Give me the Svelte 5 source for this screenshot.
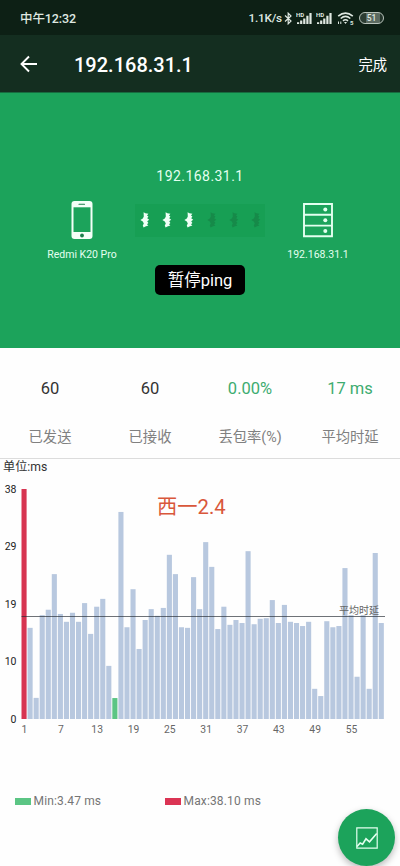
<script>
  const host = '192.168.31.1';
  const dots = [true, true, true, false, false, false];

  const stats = [
    { value: '60', label: '已发送' },
    { value: '60', label: '已接收' },
    { value: '0.00%', label: '丢包率(%)', green: true },
    { value: '17 ms', label: '平均时延', green: true }
  ];

  const samples = [
    38.1, 15.1, 3.5, 17.2, 18.1, 24.0, 17.4, 16.1, 17.6, 16.1, 19.2, 14.1, 18.6, 19.9, 8.8,
    3.47, 34.3, 15.2, 21.5, 11.6, 16.4, 18.2, 17.1, 18.4, 27.2, 24.0, 15.2, 15.1, 23.5, 18.2,
    29.3, 25.2, 14.9, 18.6, 15.6, 16.4, 15.9, 27.8, 15.7, 16.6, 16.7, 19.7, 15.9, 18.9, 16.1,
    15.9, 15.4, 16.1, 5.0, 3.8, 16.2, 15.2, 15.4, 25.0, 17.2, 7.0, 17.2, 5.0, 27.5, 15.9
  ];

  const max = Math.max(...samples);
  const min = Math.min(...samples);

  // chart geometry
  const left = 21.5;
  const base = 244;
  const plotHeight = 230;
  const step = 6.055;
  const barWidth = 5.1;

  const yTicks = [38, 29, 19, 10, 0];
  const xTicks = [1, 7, 13, 19, 25, 31, 37, 43, 49, 55];

  function barHeight(ms) {
    return (ms / max) * plotHeight;
  }

  function barColor(ms) {
    if (ms === max) return '#d73451';
    if (ms === min) return '#5bc584';
    return '#b8c8df';
  }
</script>

<div class="screen">
  <header>
    <div class="status">
      <span class="time">中午12:32</span>
      <div class="indicators">
        <span class="speed">1.1K/s</span>
        <svg width="9" height="13" viewBox="0 0 9 13" fill="none" stroke="#dfe8e1" stroke-width="1.2">
          <path d="M1 3.5 7 9 4.2 11.8V1.2L7 4 1 9.5" />
        </svg>
        {#each [0, 1] as sim (sim)}
          <svg class="signal" width="17" height="13" viewBox="0 0 17 13" fill="#dfe8e1">
            <text x="0" y="4.9">HD</text>
            <path d="M1 10.3h2.2V12H1zM4.1 8.6h2.2V12H4.1zM7.2 6.6h2.2V12H7.2zM10.3 3.8h2.2V12h-2.2zM13.4 1h2.2v11h-2.2z" />
          </svg>
        {/each}
        <svg class="wifi" width="18" height="13" viewBox="0 0 18 13" fill="none" stroke="#dfe8e1" stroke-width="1.6">
          <path d="M1.2 4.2Q8.5-2 15.8 4.2M3.7 6.5Q8.5 2.3 13.3 6.5M6 8.8Q8.5 6.7 11 8.8" />
          <path d="M7 10h3L8.5 12z" fill="#dfe8e1" stroke="none" />
          <path d="M1.5 9.5V12M3.8 9.5V12" stroke-width="1" />
          <text x="13" y="12.6" fill="#dfe8e1" stroke="none">5</text>
        </svg>
        <span class="battery">51</span>
      </div>
    </div>
    <div class="appbar">
      <svg width="18" height="18" viewBox="0 0 18 18" fill="none" stroke="#fff" stroke-width="1.9">
        <path d="M17 9H2M9 1.5 1.5 9 9 16.5" />
      </svg>
      <h1>{host}</h1>
      <span class="done">完成</span>
    </div>
  </header>

  <section class="hero">
    <p class="target">{host}</p>
    <div class="link">
      <div class="device">
        <svg width="22" height="38" viewBox="0 0 22 38">
          <rect x=".5" width="21" height="38" rx="3" fill="#f4fff8" />
          <rect x="2.5" y="6.3" width="17" height="24.7" fill="#1ca35b" />
          <path d="M8 3.2h5.5" stroke="#1b7f4b" stroke-width="1.1" stroke-linecap="round" />
          <circle cx="11" cy="34.5" r="1.9" fill="#1b7f4b" />
        </svg>
        <span>Redmi K20 Pro</span>
      </div>
      <div class="packets">
        {#each dots as on, i (i)}
          <svg class:on width="10" height="16" viewBox="0 0 10 16">
            <path d="M3.6.3 5.4 1.2 8.4 1.8 7 3.6 8.4 4.6 7.2 6.2 9.2 7.8 7.2 9.2 8.4 11 7 12.2 8.4 13.6 5.4 14.4 3.6 15.6 2.8 13.4 3.8 11.4 2.8 9.4.4 7.9l2.4-1.5 1-2z" />
          </svg>
        {/each}
      </div>
      <div class="device">
        <svg width="30" height="38" viewBox="0 0 30 38" fill="none" stroke="#e4fff0" stroke-width="1.9">
          <path d="M1 3h28v32.3H1zM1 13.8h28M1 24.6h28" />
          <g fill="#e4fff0" stroke="none">
            <circle cx="22.3" cy="8.6" r="2" />
            <circle cx="22.3" cy="19.3" r="2" />
            <circle cx="22.3" cy="30.1" r="2" />
          </g>
        </svg>
        <span>{host}</span>
      </div>
    </div>
    <button class="pause">暂停ping</button>
  </section>

  <section class="stats">
    {#each stats as stat}
      <div class="stat" class:green={stat.green}>
        <strong>{stat.value}</strong>
        <span>{stat.label}</span>
      </div>
    {/each}
  </section>

  <section class="chart">
    <div class="unit">单位:ms</div>
    <svg width="400" height="270" viewBox="0 0 400 270">
      {#each samples as ms, i}
        <rect
          x={left + i * step}
          y={base - barHeight(ms)}
          width={barWidth}
          height={barHeight(ms)}
          fill={barColor(ms)}
        />
      {/each}
      {#each yTicks as tick, i}
        <text class="y-tick" x="16.5" y={17.7 + i * 57.5}>{tick}</text>
      {/each}
      {#each xTicks as tick}
        <text class="x-tick" x={left + (tick - 1) * step + 3} y="258">{tick}</text>
      {/each}
      <path d="M21.5 141.5H385" stroke="#20262e" stroke-opacity=".65" />
      <text class="average" x="379" y="139">平均时延</text>
      <text class="note" x="157" y="39">西一2.4</text>
    </svg>
  </section>

  <footer>
    <div class="legend"><i class="min"></i>Min:{min.toFixed(2)} ms</div>
    <div class="legend"><i class="max"></i>Max:{max.toFixed(2)} ms</div>
  </footer>

  <button class="fab" aria-label="chart">
    <svg width="22" height="22" viewBox="0 0 22 22" fill="none" stroke="#e4fff0" stroke-width="1.2">
      <path d="M.8.8h20.4v20.4H.8z" />
      <path d="M1 19.5 4.2 16l2.4 1.2 3.4-5.4 3.5 3 7.2-8.3" stroke-width="1.6" />
    </svg>
  </button>
</div>

<style>
  :global(body) {
    margin: 0;
    background: #fff;
  }

  .screen {
    position: relative;
    width: 400px;
    height: 866px;
    overflow: hidden;
    background: #fefefe;
    font-family: Roboto, 'Noto Sans CJK SC', sans-serif;
    color: #333;
  }

  .status {
    display: flex;
    align-items: center;
    justify-content: space-between;
    box-sizing: border-box;
    height: 35px;
    padding: 1px 16px 0 20px;
    background: #0d2015;
    color: #dfe8e1;
    font-weight: 500;
  }

  .time {
    margin-top: -2px;
    font-size: 12.5px;
    letter-spacing: -0.1px;
  }

  .indicators {
    display: flex;
    align-items: center;
  }

  .speed {
    margin-right: 2px;
    font-size: 11.8px;
    letter-spacing: -0.2px;
  }

  .signal {
    margin-left: 3px;
  }

  .signal text {
    font-size: 6px;
    font-weight: 700;
  }

  .wifi {
    margin-left: 4px;
  }

  .wifi text {
    font-size: 6px;
    font-weight: 700;
  }

  .battery {
    box-sizing: border-box;
    width: 25px;
    height: 12px;
    margin-left: 4px;
    border: 1.5px solid #b9c4bc;
    border-radius: 6px;
    background: linear-gradient(90deg, #2b3c32 25%, #5b6a60 25%, #5b6a60 85%, #24352b 85%);
    font-size: 8.5px;
    font-weight: 500;
    line-height: 10px;
    text-align: center;
  }

  .appbar {
    display: flex;
    align-items: center;
    box-sizing: border-box;
    height: 58px;
    padding: 0 13px 0 20px;
    border-bottom: 1px solid #176b3f;
    background: #142e20;
    color: #fff;
  }

  h1 {
    flex: 1;
    margin: 2px 0 0 36px;
    font-size: 20px;
    font-weight: 500;
  }

  .done {
    font-size: 14.3px;
  }

  .hero {
    display: flex;
    flex-direction: column;
    align-items: center;
    box-sizing: border-box;
    height: 255px;
    padding-top: 73px;
    background: #1ca35b;
    color: #e4fff0;
  }

  .target {
    margin: 0;
    font-size: 14px;
    line-height: 20px;
    letter-spacing: 0.45px;
  }

  .link {
    display: grid;
    grid-template-columns: 106px 130px 106px;
    align-items: start;
    margin-top: 15px;
  }

  .device {
    display: flex;
    flex-direction: column;
    align-items: center;
    font-size: 10.5px;
    line-height: 14px;
    white-space: nowrap;
  }

  .device span {
    margin-top: 9px;
  }

  .packets {
    display: flex;
    align-items: center;
    justify-content: space-between;
    box-sizing: border-box;
    height: 33px;
    margin-top: 3px;
    padding: 0 4px 2px 5px;
    background: #179f54;
  }

  .packets svg {
    fill: #168a49;
  }

  .packets svg.on {
    fill: #f0fff6;
  }

  .pause {
    width: 90px;
    height: 30px;
    margin-top: 3px;
    padding: 0;
    border: 0;
    border-radius: 5px;
    background: #000;
    color: #fff;
    font-family: inherit;
    font-size: 16.5px;
    line-height: 32px;
  }

  .stats {
    display: grid;
    grid-template-columns: repeat(4, 1fr);
    box-sizing: border-box;
    height: 111px;
    padding-top: 29px;
    border-bottom: 1px solid #dcdcdc;
  }

  .stat {
    display: flex;
    flex-direction: column;
    align-items: center;
    gap: 26px;
  }

  .stat strong {
    font-size: 16.5px;
    font-weight: 400;
    line-height: 24px;
  }

  .stat span {
    color: #808080;
    font-size: 14.3px;
    line-height: 20px;
  }

  .stat.green strong {
    color: #3dac70;
  }

  .unit {
    height: 16px;
    padding-left: 3px;
    font-size: 12.2px;
    line-height: 16px;
  }

  .chart svg {
    display: block;
  }

  .y-tick {
    font-size: 10.5px;
    text-anchor: end;
    fill: #222;
  }

  .x-tick {
    font-size: 10.3px;
    text-anchor: middle;
    fill: #666;
  }

  .average {
    font-size: 10px;
    text-anchor: end;
    fill: #666;
  }

  .note {
    font-size: 20.3px;
    fill: #d9573b;
  }

  footer {
    display: grid;
    grid-template-columns: 150px 150px;
    margin-top: 48px;
    padding-left: 15px;
    color: #757575;
    font-size: 12px;
    line-height: 16px;
  }

  .legend {
    display: flex;
    align-items: center;
    letter-spacing: 0.15px;
  }

  .legend i {
    width: 15.5px;
    height: 7px;
    margin-right: 3px;
  }

  .min {
    background: #5bc584;
  }

  .max {
    background: #db3454;
  }

  .fab {
    position: absolute;
    right: 5px;
    bottom: 0;
    display: flex;
    align-items: center;
    justify-content: center;
    width: 57px;
    height: 57px;
    padding: 0;
    border: 0;
    border-radius: 50%;
    background: #1ca35b;
    box-shadow: 0 3px 7px rgba(0, 0, 0, 0.28);
  }
</style>
